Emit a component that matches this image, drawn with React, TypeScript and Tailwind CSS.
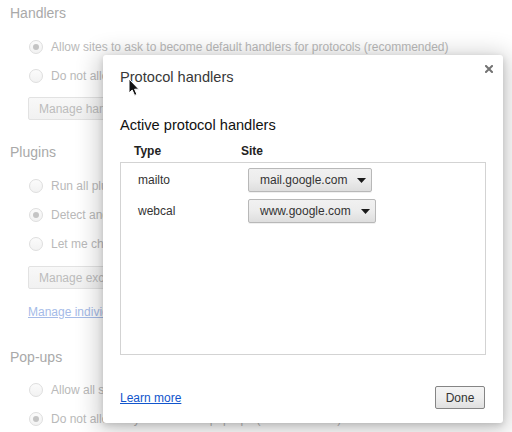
import React from "react";

function Radio({ checked }: { checked?: boolean }) {
  return (
    <span className="w-[14px] h-[14px] rounded-full border border-[#dedede] bg-gradient-to-b from-[#fbfbfb] to-[#f2f2f2] flex items-center justify-center shrink-0">
      {checked && <span className="w-[6px] h-[6px] rounded-full bg-[#c4c4c4]" />}
    </span>
  );
}

function RadioRow({ checked, label }: { checked?: boolean; label: string }) {
  return (
    <div className="h-[29px] flex items-center pl-[29px] gap-[8px] shrink-0">
      <Radio checked={checked} />
      <span className="text-[12px] leading-[16px] text-[#b9b9b9] whitespace-nowrap">{label}</span>
    </div>
  );
}

function BgButton({ label, mt }: { label: string; mt: string }) {
  return (
    <div className={`${mt} ml-[28px] h-[23px] w-[200px] shrink-0 flex items-center px-[10px] rounded-[2px] border border-[#e2e2e2] bg-gradient-to-b from-[#f8f8f8] to-[#f1f1f1] text-[12px] text-[#bcbcbc] whitespace-nowrap`}>
      {label}
    </div>
  );
}

function Heading({ label, mt }: { label: string; mt?: string }) {
  return (
    <div className={`${mt ?? ""} h-[26px] shrink-0 flex items-center pl-[10px] text-[14px] text-[#a9a9a9]`}>
      {label}
    </div>
  );
}

function Select({ label }: { label: string }) {
  return (
    <div className="inline-flex h-[24px] items-center pl-[11px] pr-[5px] rounded-[2px] border border-[#b8b8b8] bg-gradient-to-b from-[#f1f1f1] via-[#ececec] to-[#dedede] shadow-[0_1px_0_rgba(0,0,0,0.06)] text-[12px] text-[#333] whitespace-nowrap">
      <span>{label}</span>
      <svg width="9" height="5" viewBox="0 0 9 5" className="ml-[10px] mt-[1px]">
        <path d="M0 0 L9 0 L4.5 5 Z" fill="#1a1a1a" />
      </svg>
    </div>
  );
}

export default function App() {
  return (
    <div className="relative w-[512px] h-[432px] overflow-hidden bg-white font-['Liberation_Sans',Arial,sans-serif]">
      {/* background settings page */}
      <div className="flex flex-col">
        <Heading label="Handlers" />
        <div className="mt-[6px]" />
        <RadioRow checked label="Allow sites to ask to become default handlers for protocols (recommended)" />
        <RadioRow label="Do not allow any site to handle protocols" />
        <BgButton mt="mt-[7px]" label="Manage handlers..." />
        <Heading mt="mt-[19px]" label="Plugins" />
        <div className="mt-[6px]" />
        <RadioRow label="Run all plugin content" />
        <RadioRow checked label="Detect and run important plugin content (recommended)" />
        <RadioRow label="Let me choose when to run plugin content" />
        <BgButton mt="mt-[8px]" label="Manage exceptions..." />
        <div className="mt-[15px] h-[16px] shrink-0 pl-[28px] text-[12px] leading-[16px] text-[#a5bbe8] underline whitespace-nowrap">
          Manage individual plugins...
        </div>
        <Heading mt="mt-[24px]" label="Pop-ups" />
        <div className="mt-[5px]" />
        <RadioRow label="Allow all sites to show pop-ups" />
        <RadioRow checked label="Do not allow any site to show pop-ups (recommended)" />
      </div>

      {/* dialog */}
      <div className="absolute left-[103px] top-[55px] w-[400px] h-[368px] bg-white rounded-[3px] shadow-[0_4px_23px_5px_rgba(0,0,0,0.2),0_2px_6px_rgba(0,0,0,0.15)] flex flex-col px-[17px] pt-[13px] pb-[14px]">
        <div className="text-[14.6px] leading-[18px] text-[#383838]">Protocol handlers</div>
        <button className="absolute top-[10px] right-[10px] w-[8px] h-[8px] flex items-center justify-center">
          <svg width="8" height="8" viewBox="0 0 8 8">
            <path d="M1 1 L7 7 M7 1 L1 7" stroke="#737373" strokeWidth="2" strokeLinecap="square" />
          </svg>
        </button>

        <div className="mt-[30px] text-[14.6px] leading-[18px] text-[#111]">Active protocol handlers</div>

        <div className="mt-[9px] flex text-[12px] leading-[16px] font-bold text-[#222]">
          <div className="w-[121px] pl-[14px]">Type</div>
          <div>Site</div>
        </div>

        <div className="mt-[3px] h-[193px] border border-[#d3d3d3] flex flex-col pt-[5px] gap-[7px]">
          <div className="flex items-center">
            <div className="w-[127px] pl-[17px] text-[12px] text-[#333]">mailto</div>
            <Select label="mail.google.com" />
          </div>
          <div className="flex items-center">
            <div className="w-[127px] pl-[17px] text-[12px] text-[#333]">webcal</div>
            <Select label="www.google.com" />
          </div>
        </div>

        <div className="mt-auto flex items-center justify-between">
          <a className="text-[12px] leading-[16px] text-[#1155cc] underline cursor-pointer">Learn more</a>
          <button className="mr-[1px] w-[50px] h-[23px] rounded-[2px] border border-[#858585] bg-gradient-to-b from-[#f4f4f4] via-[#eeeeee] to-[#e0e0e0] text-[12px] text-[#333] flex items-center justify-center">
            Done
          </button>
        </div>
      </div>

      {/* mouse cursor */}
      <svg className="absolute left-[128px] top-[78px]" width="12" height="19" viewBox="0 0 12 19">
        <path d="M1 1 L1 15 L4.2 12 L6.6 17.4 L8.9 16.4 L6.6 11.2 L10.8 11.2 Z" fill="#111" stroke="#fff" strokeWidth="1" strokeLinejoin="round" />
      </svg>
    </div>
  );
}
